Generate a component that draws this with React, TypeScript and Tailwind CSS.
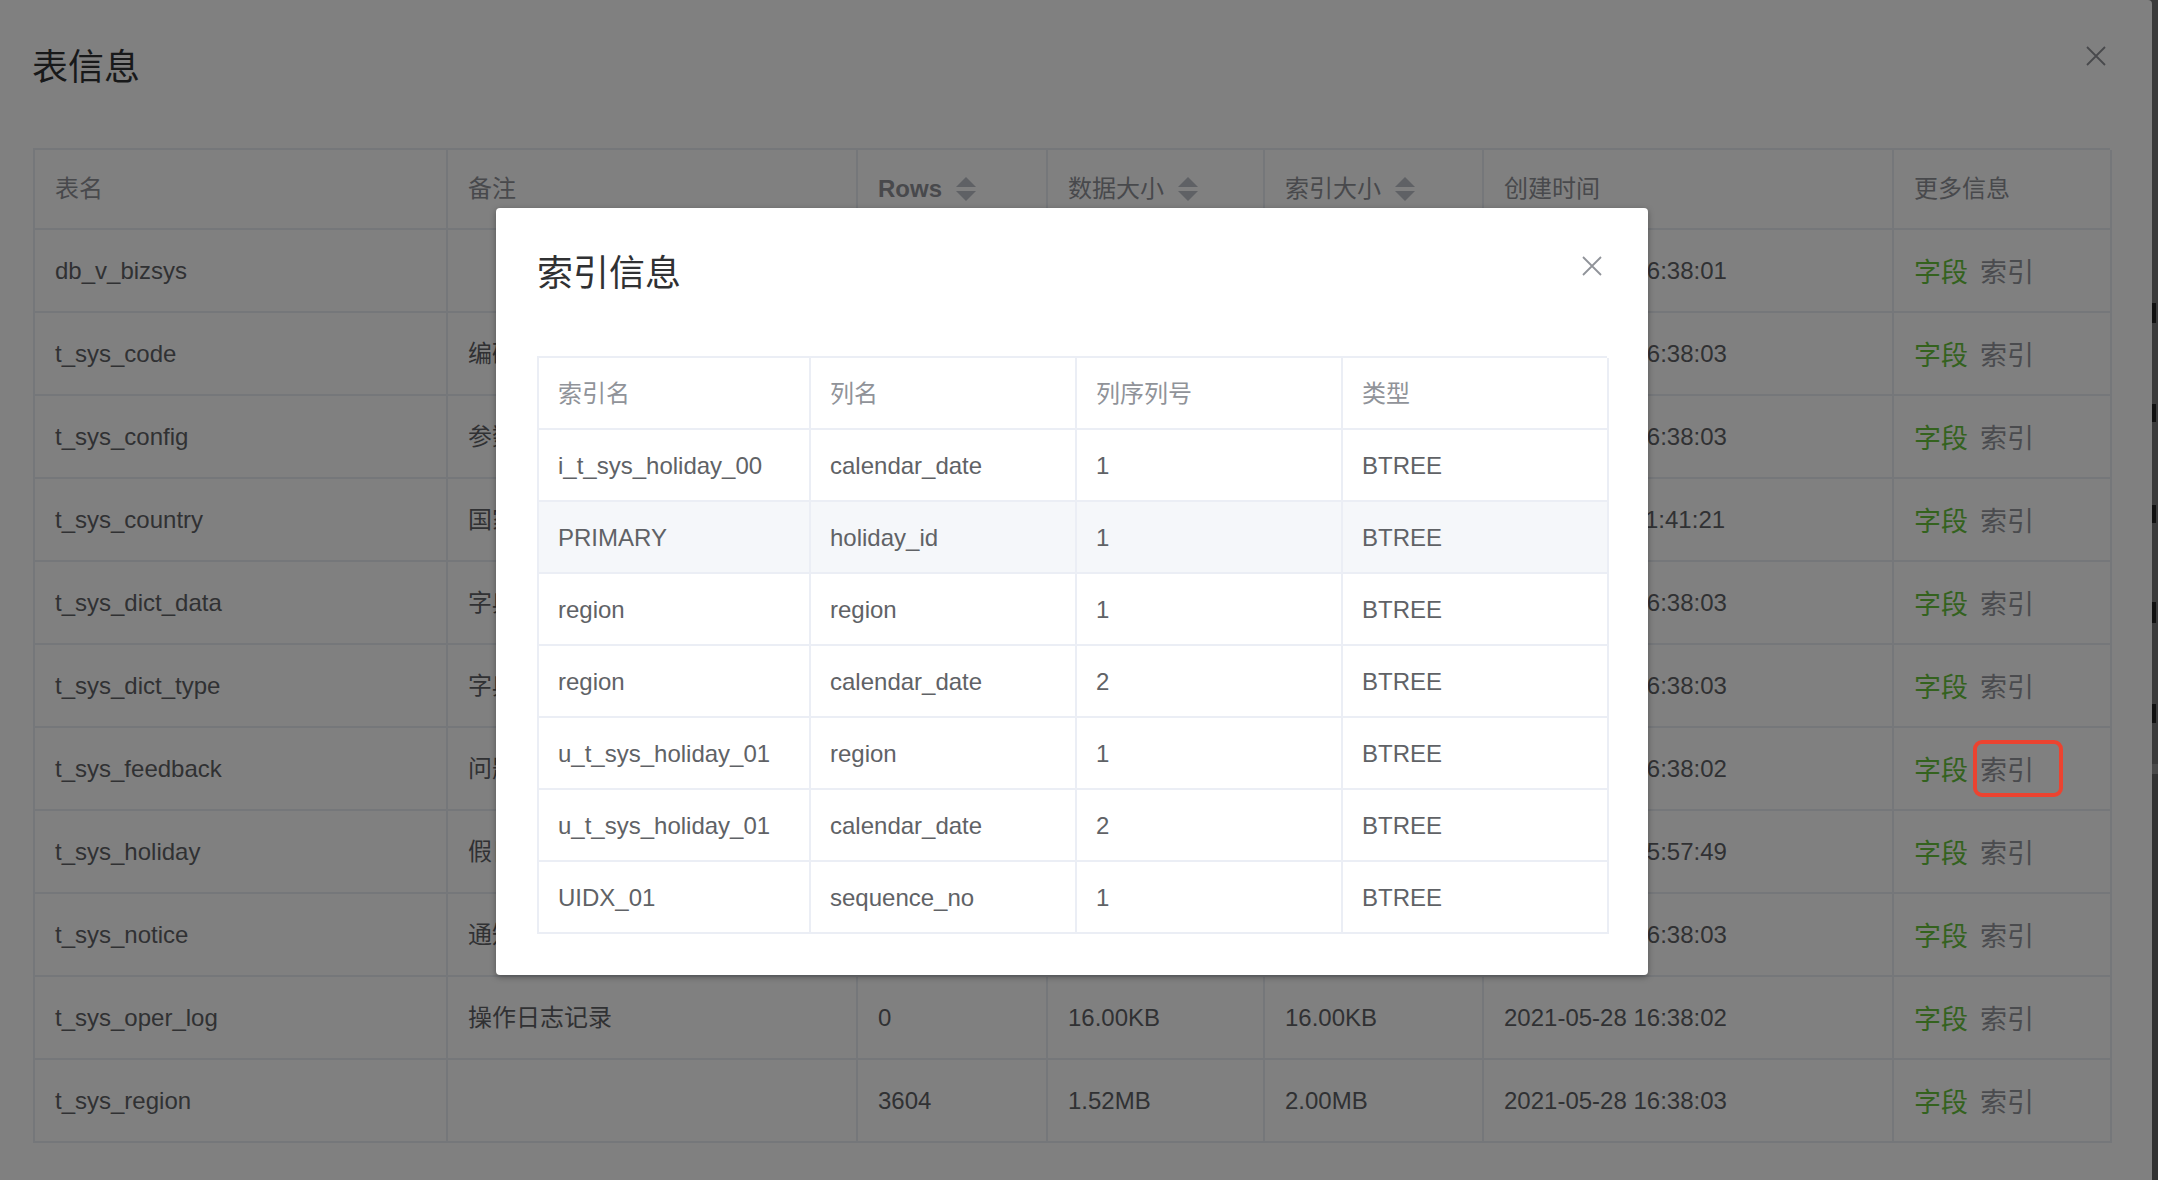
import React from "react";

// rows 1-9: the size columns sit under the index dialog, so they are left empty
const tables = [
  { name: "db_v_bizsys", remark: "", rows: "", data: "", index: "", time: "2021-05-28 16:38:01" },
  { name: "t_sys_code", remark: "编码规则表", rows: "", data: "", index: "", time: "2021-05-28 16:38:03" },
  { name: "t_sys_config", remark: "参数配置表", rows: "", data: "", index: "", time: "2021-05-28 16:38:03" },
  { name: "t_sys_country", remark: "国家表", rows: "", data: "", index: "", time: "2021-05-28 11:41:21" },
  { name: "t_sys_dict_data", remark: "字典数据表", rows: "", data: "", index: "", time: "2021-05-28 16:38:03" },
  { name: "t_sys_dict_type", remark: "字典类型表", rows: "", data: "", index: "", time: "2021-05-28 16:38:03" },
  { name: "t_sys_feedback", remark: "问题反馈表", rows: "", data: "", index: "", time: "2021-05-28 16:38:02" },
  { name: "t_sys_holiday", remark: "假日表", rows: "", data: "", index: "", time: "2021-05-28 15:57:49" },
  { name: "t_sys_notice", remark: "通知公告表", rows: "", data: "", index: "", time: "2021-05-28 16:38:03" },
  { name: "t_sys_oper_log", remark: "操作日志记录", rows: "0", data: "16.00KB", index: "16.00KB", time: "2021-05-28 16:38:02" },
  { name: "t_sys_region", remark: "", rows: "3604", data: "1.52MB", index: "2.00MB", time: "2021-05-28 16:38:03" },
];

const indexes = [
  ["i_t_sys_holiday_00", "calendar_date", "1", "BTREE"],
  ["PRIMARY", "holiday_id", "1", "BTREE"],
  ["region", "region", "1", "BTREE"],
  ["region", "calendar_date", "2", "BTREE"],
  ["u_t_sys_holiday_01", "region", "1", "BTREE"],
  ["u_t_sys_holiday_01", "calendar_date", "2", "BTREE"],
  ["UIDX_01", "sequence_no", "1", "BTREE"],
];

function CloseIcon({ color }: { color: string }) {
  return (
    <svg width="20" height="20" viewBox="0 0 20 20" fill="none">
      <path d="M1 1 L19 19 M19 1 L1 19" stroke={color} strokeWidth="1.8" />
    </svg>
  );
}

function SortCaret() {
  return (
    <svg width="20" height="24" viewBox="0 0 20 24" className="ml-[14px]">
      <path d="M10 0 L20 10 L0 10 Z" fill="#5f6165" />
      <path d="M0 14 L20 14 L10 24 Z" fill="#5f6165" />
    </svg>
  );
}

function HeadCell({ children }: { children: React.ReactNode }) {
  return (
    <div className="flex h-[80px] items-center border-r-2 border-b-2 border-[#75777a] pl-[20px] text-[#48494c]">
      {children}
    </div>
  );
}

function Cell({ children }: { children?: React.ReactNode }) {
  return (
    <div className="flex h-[83px] items-center overflow-hidden whitespace-nowrap border-r-2 border-b-2 border-[#75777a] pl-[20px] text-[#303133]">
      {children}
    </div>
  );
}

function IndexDialog() {
  return (
    <div className="absolute left-[496px] top-[208px] w-[1152px] rounded-[4px] bg-white shadow-[0_2px_6px_rgba(0,0,0,0.35)]">
      <div className="flex h-[148px] items-start justify-between pl-[41px] pr-[46px] pt-[48px]">
        <span className="text-[36px] leading-[36px] text-[#303133]">索引信息</span>
        <CloseIcon color="#909399" />
      </div>
      <div className="px-[41px] pb-[41px]">
        <div className="grid grid-cols-[272px_266px_266px_266px] border-l-2 border-t-2 border-[#ebeef5] text-[24px]">
          {["索引名", "列名", "列序列号", "类型"].map((h) => (
            <div key={h} className="flex h-[72px] items-center border-r-2 border-b-2 border-[#ebeef5] pl-[19px] pt-[2px] text-[#909399]">
              {h}
            </div>
          ))}
          {indexes.map((r, i) =>
            r.map((v, j) => (
              <div
                key={i + "-" + j}
                className={
                  "flex h-[72px] items-center border-r-2 border-b-2 border-[#ebeef5] pl-[19px] pt-[2px] text-[#606266] " +
                  (i === 1 ? "bg-[#f5f7fa]" : "bg-white")
                }
              >
                {v}
              </div>
            ))
          )}
        </div>
      </div>
    </div>
  );
}

export default function App() {
  return (
    <div className="relative flex h-[1180px] w-[2158px] overflow-hidden bg-[#3b3b3b] font-['Liberation_Sans','Noto_Sans_CJK_SC',sans-serif]">
      <div className="h-full w-[2152px] shrink-0 rounded-tr-[4px] bg-[#808080]">
        <div className="flex h-[148px] items-start justify-between pl-[32px] pr-[46px] pt-[46px]">
          <span className="mt-[4px] text-[36px] leading-[36px] text-[#18191a]">表信息</span>
          <CloseIcon color="#48494c" />
        </div>
        <div className="ml-[33px] grid w-[2077px] grid-cols-[413px_410px_190px_217px_219px_410px_218px] border-l-2 border-t-2 border-[#75777a] text-[24px]">
          <HeadCell>表名</HeadCell>
          <HeadCell>备注</HeadCell>
          <HeadCell>
            <span className="font-bold">Rows</span>
            <SortCaret />
          </HeadCell>
          <HeadCell>
            数据大小
            <SortCaret />
          </HeadCell>
          <HeadCell>
            索引大小
            <SortCaret />
          </HeadCell>
          <HeadCell>创建时间</HeadCell>
          <HeadCell>更多信息</HeadCell>
          {tables.map((t) => (
            <React.Fragment key={t.name}>
              <Cell>{t.name}</Cell>
              <Cell>{t.remark}</Cell>
              <Cell>{t.rows}</Cell>
              <Cell>{t.data}</Cell>
              <Cell>{t.index}</Cell>
              <Cell>{t.time}</Cell>
              <Cell>
                <span className="mt-[5px] text-[27px] text-[#34621e]">字段</span>
                <span className="ml-[12px] mt-[5px] text-[27px] text-[#4a4b4e]">索引</span>
              </Cell>
            </React.Fragment>
          ))}
        </div>
      </div>

      <div className="flex w-[6px] flex-col">
        <div className="h-[303px]" />
        <div className="h-[20px] w-[4px] bg-[#111]" />
        <div className="h-[81px]" />
        <div className="h-[18px] w-[4px] bg-[#111]" />
        <div className="h-[83px]" />
        <div className="h-[18px] w-[4px] bg-[#111]" />
        <div className="h-[79px]" />
        <div className="h-[21px] w-[4px] bg-[#111]" />
        <div className="h-[81px]" />
        <div className="h-[19px] w-[4px] bg-[#111]" />
        <div className="h-[41px]" />
        <div className="h-[10px] bg-[#4a4a4a]" />
        <div className="flex-1 bg-[#333]" />
      </div>

      <IndexDialog />

      <div className="pointer-events-none absolute left-[1973px] top-[740px] h-[57px] w-[90px] rounded-[9px] border-[4px] border-[#ec4330]" />
    </div>
  );
}
